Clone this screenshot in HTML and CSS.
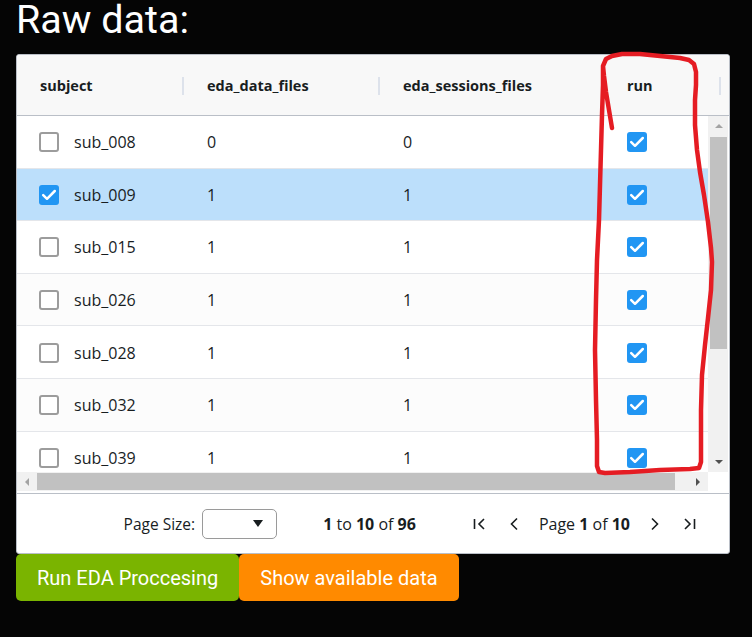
FILE: index.html
```html
<!DOCTYPE html>
<html>
<head>
<meta charset="utf-8">
<link rel="stylesheet" href="styles.css">
</head>
<body>
<div class="page">
  <h1 class="title">Raw data:</h1>
  <div class="grid">
    <div class="head">
      <div class="hc c1"><span>subject</span><span class="sep"></span></div>
      <div class="hc c2"><span>eda_data_files</span><span class="sep"></span></div>
      <div class="hc c3"><span>eda_sessions_files</span><span class="sep"></span></div>
      <div class="hc c4"><span>run</span><span class="sep"></span></div>
    </div>
    <div class="main">
      <div class="viewport">
        <div class="rows">
          <div class="row">
            <div class="cell c1 first"><span class="cb"></span><span>sub_008</span></div>
            <div class="cell c2">0</div>
            <div class="cell c3">0</div>
            <div class="cell c4"><span class="cb on"><svg viewBox="0 0 20 20" width="20" height="20"><path d="M4.2 10.2 L8 13.8 L15.8 6" /></svg></span></div>
          </div>
          <div class="row alt sel">
            <div class="cell c1 first"><span class="cb on"><svg viewBox="0 0 20 20" width="20" height="20"><path d="M4.2 10.2 L8 13.8 L15.8 6" /></svg></span><span>sub_009</span></div>
            <div class="cell c2">1</div>
            <div class="cell c3">1</div>
            <div class="cell c4"><span class="cb on"><svg viewBox="0 0 20 20" width="20" height="20"><path d="M4.2 10.2 L8 13.8 L15.8 6" /></svg></span></div>
          </div>
          <div class="row">
            <div class="cell c1 first"><span class="cb"></span><span>sub_015</span></div>
            <div class="cell c2">1</div>
            <div class="cell c3">1</div>
            <div class="cell c4"><span class="cb on"><svg viewBox="0 0 20 20" width="20" height="20"><path d="M4.2 10.2 L8 13.8 L15.8 6" /></svg></span></div>
          </div>
          <div class="row alt">
            <div class="cell c1 first"><span class="cb"></span><span>sub_026</span></div>
            <div class="cell c2">1</div>
            <div class="cell c3">1</div>
            <div class="cell c4"><span class="cb on"><svg viewBox="0 0 20 20" width="20" height="20"><path d="M4.2 10.2 L8 13.8 L15.8 6" /></svg></span></div>
          </div>
          <div class="row">
            <div class="cell c1 first"><span class="cb"></span><span>sub_028</span></div>
            <div class="cell c2">1</div>
            <div class="cell c3">1</div>
            <div class="cell c4"><span class="cb on"><svg viewBox="0 0 20 20" width="20" height="20"><path d="M4.2 10.2 L8 13.8 L15.8 6" /></svg></span></div>
          </div>
          <div class="row alt">
            <div class="cell c1 first"><span class="cb"></span><span>sub_032</span></div>
            <div class="cell c2">1</div>
            <div class="cell c3">1</div>
            <div class="cell c4"><span class="cb on"><svg viewBox="0 0 20 20" width="20" height="20"><path d="M4.2 10.2 L8 13.8 L15.8 6" /></svg></span></div>
          </div>
          <div class="row">
            <div class="cell c1 first"><span class="cb"></span><span>sub_039</span></div>
            <div class="cell c2">1</div>
            <div class="cell c3">1</div>
            <div class="cell c4"><span class="cb on"><svg viewBox="0 0 20 20" width="20" height="20"><path d="M4.2 10.2 L8 13.8 L15.8 6" /></svg></span></div>
          </div>
        </div>
      </div>
      <div class="vscroll">
        <div class="sbtn"><svg width="10" height="6" viewBox="0 0 10 6"><path class="tri-light" d="M1 5 L5 1 L9 5 Z"/></svg></div>
        <div class="vthumb"></div>
        <div class="grow"></div>
        <div class="sbtn"><svg width="10" height="6" viewBox="0 0 10 6"><path class="tri-dark" d="M1 1 L9 1 L5 5 Z"/></svg></div>
      </div>
    </div>
    <div class="hrow">
      <div class="hscroll">
        <div class="hbtn"><svg width="6" height="10" viewBox="0 0 6 10"><path class="tri-light" d="M5 1 L5 9 L1 5 Z"/></svg></div>
        <div class="hthumb"></div>
        <div class="grow"></div>
        <div class="hbtn"><svg width="6" height="10" viewBox="0 0 6 10"><path class="tri-dark" d="M1 1 L5 5 L1 9 Z"/></svg></div>
      </div>
      <div class="corner"></div>
    </div>
    <div class="foot">
      <span class="lbl">Page Size:</span>
      <span class="select"><svg width="10" height="7" viewBox="0 0 10 7"><path d="M0 0 L10 0 L5 7 Z"/></svg></span>
      <span class="summary"><b>1</b> to <b>10</b> of <b>96</b></span>
      <svg class="ic first-ic" width="16" height="16" viewBox="0 0 16 16"><path d="M2.5 3 L2.5 13 M12 3 L7 8 L12 13"/></svg>
      <svg class="ic prev-ic" width="16" height="16" viewBox="0 0 16 16"><path d="M11 2.5 L5.5 8 L11 13.5"/></svg>
      <span class="pageof">Page <b>1</b> of <b>10</b></span>
      <svg class="ic next-ic" width="16" height="16" viewBox="0 0 16 16"><path d="M5 2.5 L10.5 8 L5 13.5"/></svg>
      <svg class="ic last-ic" width="16" height="16" viewBox="0 0 16 16"><path d="M4 3 L9 8 L4 13 M13.5 3 L13.5 13"/></svg>
    </div>
  </div>
  <div class="actions">
    <button class="btn green">Run EDA Proccesing</button>
    <button class="btn orange">Show available data</button>
  </div>
</div>
<svg class="ink" width="752" height="637" viewBox="0 0 752 637">
  <path d="M612 128 L609 110 L606 92 L604 76 L603 66 L606 59 L612 56 L622 54 L640 54 L660 56 L680 58 L689 60 L694 64 L696 72 L696 85 L695 100 L695 125 L697 150 L700 172 L704 195 L708 222 L711 248 L712 262 L711 290 L708 318 L705 345 L702 375 L701 410 L701 440 L701 462 L699 468 L690 469 L660 470 L630 472 L605 473 L599 472 L597 466 L597 440 L596 400 L595 350 L596 300 L597 260 L599 220 L600 185 L601 150 L602 115 L603 85 L603 66"/>
</svg>
</body>
</html>
```

FILE: styles.css
```css
* { box-sizing: border-box; }

body {
  margin: 0;
  background: #050505;
}

.page {
  padding-left: 16px;
}

.title {
  font-family: Roboto, "Liberation Sans", sans-serif;
  font-size: 39.5px;
  font-weight: 400;
  line-height: 40px;
  color: #ffffff;
  margin: 0 0 14px 0;
}

.grid {
  width: 714px;
  height: 500px;
  border: 1px solid #babfc7;
  border-radius: 3px;
  background: #ffffff;
  display: flex;
  flex-direction: column;
  overflow: hidden;
  font-family: "Open Sans", "Noto Sans", sans-serif;
  color: #181d1f;
}

.head {
  height: 61px;
  flex: none;
  display: flex;
  background: #f8f8f8;
  border-bottom: 1px solid #babfc7;
}

.hc {
  display: flex;
  align-items: center;
  justify-content: space-between;
  padding-left: 23px;
  padding-top: 1px;
  font-weight: 700;
  font-size: 14.5px;
  flex: none;
}

.sep {
  width: 2px;
  height: 18px;
  background: #dde2eb;
}

.c1 { width: 167px; }
.c2 { width: 196px; }
.c3 { width: 224px; }
.c4 { width: 117px; }

.main {
  height: 356px;
  flex: none;
  display: flex;
}

.viewport {
  width: 691px;
  overflow: hidden;
}

.rows {
  width: 704px;
  display: flex;
  flex-direction: column;
}

.row {
  height: 52.6px;
  flex: none;
  display: flex;
  background: #ffffff;
  border-bottom: 1px solid #e4e6ea;
}

.row.alt { background: #fcfcfc; }
.row.sel { background: #bcdffb; }

.cell {
  display: flex;
  align-items: center;
  padding-left: 23px;
  padding-top: 1px;
  font-size: 16px;
  flex: none;
}

.cell.first { padding-left: 22px; }

.cb {
  width: 20px;
  height: 20px;
  border: 2px solid #9c9c9c;
  border-radius: 3px;
  background: #ffffff;
  margin-right: 15px;
  flex: none;
  display: block;
}

.cb.on {
  border: none;
  background: #2196f3;
}

.cb svg { display: block; }

.cb svg path {
  fill: none;
  stroke: #ffffff;
  stroke-width: 2.5;
  stroke-linecap: round;
  stroke-linejoin: round;
}

.vscroll {
  width: 20px;
  background: #f1f1f1;
  display: flex;
  flex-direction: column;
}

.sbtn {
  height: 20px;
  flex: none;
  display: flex;
  align-items: center;
  justify-content: center;
  padding-left: 1px;
}

.vthumb {
  height: 212px;
  margin: 1px 1px 0 2px;
  background: #c1c1c1;
  flex: none;
}

.grow { flex: 1; }

.tri-light { fill: #a3a3a3; }
.tri-dark { fill: #505050; }

.hrow {
  height: 19px;
  flex: none;
  display: flex;
  margin-bottom: 2px;
}

.hscroll {
  width: 691px;
  background: #f1f1f1;
  display: flex;
}

.hbtn {
  width: 20px;
  flex: none;
  display: flex;
  align-items: center;
  justify-content: center;
}

.hthumb {
  width: 638px;
  margin: 1px 0 1px 0;
  background: #c1c1c1;
  flex: none;
}

.corner {
  width: 20px;
  background: #ffffff;
}

.foot {
  height: 60px;
  flex: none;
  border-top: 1px solid #babfc7;
  display: flex;
  align-items: center;
  justify-content: flex-end;
  padding-right: 32px;
  font-size: 16px;
}

.foot b { font-weight: 700; }

.lbl { font-size: 15.5px; }

.select {
  width: 75px;
  height: 30px;
  margin-left: 7px;
  border: 1px solid #9a9a9a;
  border-radius: 5px;
  display: flex;
  align-items: center;
  justify-content: flex-end;
  padding-right: 13px;
}

.select svg { display: block; fill: #181d1f; }

.summary { margin-left: 46px; }

.ic {
  display: block;
  flex: none;
}

.ic path {
  fill: none;
  stroke: #181d1f;
  stroke-width: 1.6;
}

.first-ic { margin-left: 56px; }
.prev-ic { margin-left: 18px; }
.pageof { margin-left: 17px; }
.next-ic { margin-left: 17px; }
.last-ic { margin-left: 18px; }

.actions {
  display: flex;
}

.btn {
  height: 47px;
  border: none;
  border-radius: 5px;
  padding: 0 21px;
  font-family: Roboto, "Liberation Sans", sans-serif;
  font-size: 20px;
  color: #ffffff;
  line-height: 1;
}

.green { background: #7ab400; }
.orange { background: #ff8a00; }

.ink {
  position: absolute;
  left: 0;
  top: 0;
  pointer-events: none;
}

.ink path {
  fill: none;
  stroke: #e51c23;
  stroke-width: 4.5;
  stroke-linecap: round;
  stroke-linejoin: round;
}
```
